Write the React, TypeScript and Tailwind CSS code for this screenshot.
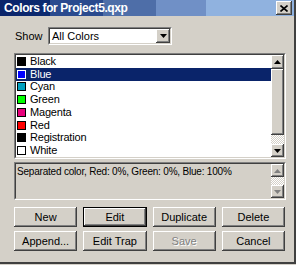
const COLORS: { name: string; swatch: string }[] = [
  { name: "Black", swatch: "bg-black" },
  { name: "Blue", swatch: "bg-[#0000ff]" },
  { name: "Cyan", swatch: "bg-[#00a0c0]" },
  { name: "Green", swatch: "bg-[#00ff00]" },
  { name: "Magenta", swatch: "bg-[#e8007c]" },
  { name: "Red", swatch: "bg-[#ff0000]" },
  { name: "Registration", swatch: "bg-black" },
  { name: "White", swatch: "bg-white" },
];

const BUTTONS = ["New", "Edit", "Duplicate", "Delete", "Append...", "Edit Trap", "Save", "Cancel"];

const raised =
  "bg-[#d4d0c8] shadow-[inset_-1px_-1px_0_#404040,inset_1px_1px_0_#ffffff,inset_-2px_-2px_0_#808080,inset_2px_2px_0_#d4d0c8]";
const checker =
  "bg-[repeating-conic-gradient(#d4d0c8_0%_25%,#ffffff_0%_50%)] bg-size-[2px_2px]";

function Arrow({ up, disabled }: { up?: boolean; disabled?: boolean }) {
  return (
    <svg width="7" height="4" viewBox="0 0 7 4">
      <path
        d={up ? "M3.5 0 L7 4 L0 4 Z" : "M0 0 L7 0 L3.5 4 Z"}
        fill={disabled ? "#808080" : "#000"}
      />
    </svg>
  );
}

function ArrowButton({ up, disabled, h }: { up?: boolean; disabled?: boolean; h: string }) {
  return (
    <div className={`${raised} ${h} w-full flex items-center justify-center shrink-0`}>
      <Arrow up={up} disabled={disabled} />
    </div>
  );
}

function Sunken({ className, children }: { className: string; children: React.ReactNode }) {
  return (
    <div className={`border border-t-[#808080] border-l-[#808080] border-b-white border-r-white ${className}`}>
      <div className="h-full w-full border border-t-[#404040] border-l-[#404040] border-b-[#d4d0c8] border-r-[#d4d0c8] flex">
        {children}
      </div>
    </div>
  );
}

export default function App() {
  return (
    <div
      className="w-[296px] h-[265px] bg-[#d4d0c8] flex flex-col overflow-hidden text-black text-[11px] leading-none"
      style={{ fontFamily: '"Liberation Sans", Arial, sans-serif' }}
    >
      <div className="w-full h-[264px] flex flex-col border-r-2 border-b-2 border-r-[#404040] border-b-[#404040]">
        {/* title bar */}
        <div className="h-[16px] shrink-0 flex items-center pl-[4px] pr-[2px] bg-[linear-gradient(to_right,#0a246a_0%,#0c2a70_17%,#2a4a8e_17%,#2a4a8e_35%,#4e6ea8_35%,#4e6ea8_53%,#7090c6_53%,#7090c6_70%,#90b2df_70%,#90b2df_100%)]">
          <span className="text-white font-bold text-[12px] tracking-[-0.4px] flex-1">Colors for Project5.qxp</span>
          <div className={`${raised} w-[16px] h-[14px] flex items-center justify-center`}>
            <svg width="8" height="7" viewBox="0 0 8 7">
              <path d="M0.5 0.5 L7.5 6.5 M7.5 0.5 L0.5 6.5" stroke="#000" strokeWidth="1.6" />
            </svg>
          </div>
        </div>

        <div className="flex-1 flex flex-col pl-[14px] pr-[8px]">
          {/* show row */}
          <div className="flex items-center mt-[11px] h-[18px]">
            <span className="w-[34px] pl-[1px]">Show</span>
            <Sunken className="w-[124px] h-[18px] bg-white">
              <span className="flex-1 flex items-center pl-[2px]">All Colors</span>
              <div className={`${raised} w-[14px] h-full flex items-center justify-center`}>
                <Arrow />
              </div>
            </Sunken>
          </div>

          {/* list */}
          <Sunken className="mt-[8px] h-[106px] bg-white">
            <div className="flex-1 flex flex-col">
              {COLORS.map((c) => {
                const sel = c.name === "Blue";
                return (
                  <div
                    key={c.name}
                    className={`h-[13px] flex items-center pl-[1px] gap-[4px] ${sel ? "bg-[#0a246a] text-white" : ""}`}
                  >
                    <span
                      className={`w-[9px] h-[9px] border ${sel ? "border-white" : "border-black"} ${c.swatch}`}
                    />
                    <span className="text-[11px] tracking-[-0.2px]">{c.name}</span>
                  </div>
                );
              })}
            </div>
            <div className="w-[13px] flex flex-col">
              <ArrowButton up h="h-[14px]" />
              <div className={`${raised} h-[66px] shrink-0`} />
              <div className={`flex-1 ${checker}`} />
              <ArrowButton h="h-[13px]" />
            </div>
          </Sunken>

          {/* description */}
          <Sunken className="mt-[3px] h-[38px]">
            <div className="flex-1 pl-[1px] pt-[3px] text-[10px] tracking-[-0.2px]">
              Separated color, Red: 0%, Green: 0%, Blue: 100%
            </div>
            <div className="w-[13px] flex flex-col">
              <ArrowButton up disabled h="h-[13px]" />
              <div className={`flex-1 ${checker}`} />
              <ArrowButton disabled h="h-[13px]" />
            </div>
          </Sunken>

          {/* buttons */}
          <div className="grid grid-cols-4 gap-x-[6px] gap-y-[4px] mt-[7px] pr-[1px]">
            {BUTTONS.map((b) => {
              const isDefault = b === "Edit";
              const disabled = b === "Save";
              return (
                <div
                  key={b}
                  className={`h-[20px] flex items-center justify-center ${raised} ${isDefault ? "outline outline-1 outline-black -outline-offset-1 shadow-[inset_-2px_-2px_0_#404040,inset_2px_2px_0_#ffffff,inset_-3px_-3px_0_#808080]" : ""} ${disabled ? "text-[#808080] [text-shadow:1px_1px_0_#ffffff]" : ""}`}
                >
                  {b}
                </div>
              );
            })}
          </div>
        </div>
      </div>
    </div>
  );
}
